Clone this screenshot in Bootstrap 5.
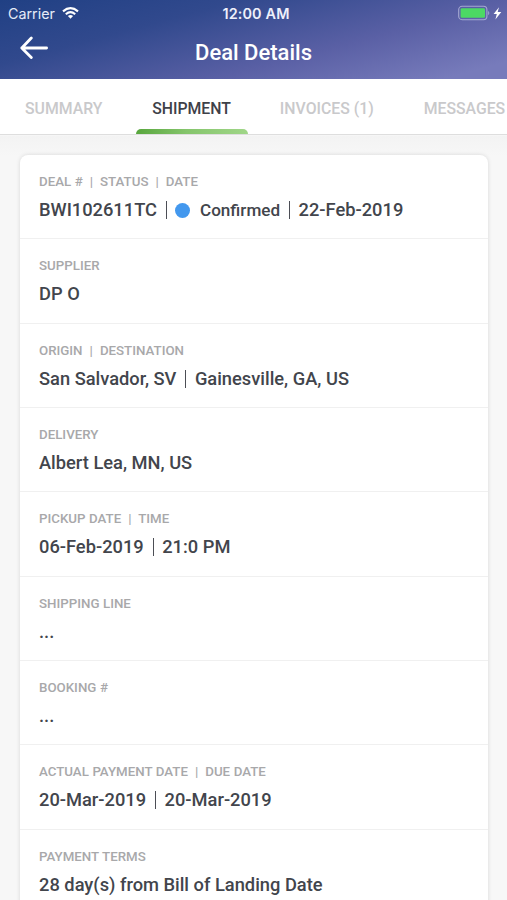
<!DOCTYPE html>
<html lang="en">
<head>
<meta charset="utf-8">
<meta name="viewport" content="width=device-width, initial-scale=1">
<title>Deal Details</title>
<link rel="stylesheet" href="https://cdn.jsdelivr.net/npm/bootstrap@5.3.0/dist/css/bootstrap.min.css">
<style>
body{font-family:Roboto,"Liberation Sans",sans-serif;background:#f6f6f6;height:900px;overflow:hidden}
.app-head{height:79px;color:#fff;background:linear-gradient(165deg,#204084 0%,#31498d 30%,#5a60a5 64%,#777bbb 92%)}
.status{height:28px;padding:0 5px 0 8px;font-size:15px;line-height:28px;font-family:Inter,sans-serif}
.status>div{flex:1 1 0}
.carrier{font-size:14.3px;color:#e6ebf8}
.clock{font-size:14.4px;font-weight:600;color:#eef0fb;letter-spacing:.15px;padding-left:2px}
.title-bar{height:51px}
.title-bar>*{flex:1 1 0;min-width:0}
.title-bar h1{font-size:22px;font-weight:500;line-height:49px;white-space:nowrap}
.back svg{margin:7px 0 0 20px}
.tabs{height:56px;background:#fff;border-bottom:1px solid #dedede;overflow:hidden;margin-bottom:1px}
.tabs .nav-link{padding:0;height:55px;line-height:59px;font-size:15.8px;font-weight:500;color:#c9c9cb;white-space:nowrap;display:flex;flex-direction:column;justify-content:space-between;align-items:center}
.tabs .nav-link.active{color:#3e4148;width:112px}
.tabs .nav-link.active::after{content:"";height:5px;width:112px;flex:none;border-radius:6px 6px 0 0;background:linear-gradient(90deg,#58a63d,#85c56c 45%,#a0d688)}
.tabs .nav-link span{height:50px}
.sheet{padding:19px 19px 0 20px;background:linear-gradient(#f3f3f3,#f7f7f7 20px)}
.deal{border:0;border-radius:8px;box-shadow:0 0 4px rgba(0,0,0,.13)}
.deal .list-group-item{height:84.33px;padding:18px 19px 0;border-color:#f0f0f0;border-width:0 0 1px;color:#42454c;background:transparent}
.lbl{font-size:13.3px;line-height:18px;font-weight:500;color:#a8a8aa;white-space:pre;word-spacing:.2px}
.val{font-size:18.3px;line-height:26px;font-weight:500;margin-top:6px;white-space:nowrap}
.state{font-size:17.1px}
.bar{width:1px;height:18px;background:#4c4e55;margin:0 8.5px 0 9px}
.dot{width:15px;height:15px;border-radius:50%;background:#4398ee;margin-right:9.5px}
</style>
<script src="https://cdn.jsdelivr.net/npm/bootstrap@5.3.0/dist/js/bootstrap.bundle.min.js"></script>
</head>
<body>
<header class="app-head">
 <div class="status d-flex">
  <div class="d-flex align-items-center"><span class="carrier">Carrier</span>
   <svg width="17" height="12" style="margin-left:7px;margin-top:-2px" viewBox="0 0 17 12" fill="none" stroke="#fff" stroke-width="2.1"><path d="M1 4.4Q8.5-2 16 4.4"/><path d="M3.8 7.2Q8.5 3.1 13.2 7.2"/><path d="M8.5 11.8L5.9 9.1Q8.5 7 11.1 9.1Z" fill="#fff" stroke="none"/></svg></div>
  <div class="clock text-center">12:00 AM</div>
  <div class="d-flex align-items-center justify-content-end">
   <svg width="45" height="16" style="margin-top:-2px;margin-right:-1px" viewBox="0 0 45 16"><rect x=".7" y="1.3" width="28.2" height="13.4" rx="3.4" fill="none" stroke="#a5a9d2" stroke-width="1.1"/><rect x="2.6" y="3.2" width="24.4" height="9.6" rx="1.4" fill="#4cd964"/><path d="M30.2 5.7q2.2 2.3 0 4.6z" fill="#a5a9d2"/><path d="M41 2.2L35.6 9h3.2l-1.4 5.6 5.9-7.5h-3.6z" fill="#fff"/></svg></div>
 </div>
 <div class="title-bar d-flex">
  <div class="back"><svg class="d-block" width="28" height="24" viewBox="0 0 28 24" fill="none" stroke="#fff" stroke-width="2.8" stroke-linecap="round" stroke-linejoin="round"><path d="M26.6 13H1.8M11.3 3L1.8 13l9.5 9.6"/></svg></div>
  <h1 class="m-0 text-center">Deal Details</h1><div></div>
 </div>
</header>
<nav class="tabs nav flex-nowrap">
 <a class="nav-link" style="margin-left:25px"><span>SUMMARY</span></a>
 <a class="nav-link active" style="margin-left:33.2px"><span>SHIPMENT</span></a>
 <a class="nav-link" style="margin-left:32.3px"><span>INVOICES (1)</span></a>
 <a class="nav-link" style="margin-left:50px"><span>MESSAGES</span></a>
</nav>
<main class="sheet">
 <ul class="deal card list-group list-group-flush">
  <li class="list-group-item"><div class="lbl">DEAL #  |  STATUS  |  DATE</div><div class="val d-flex align-items-center">BWI102611TC<i class="bar"></i><i class="dot"></i><span class="state">Confirmed</span><i class="bar"></i>22-Feb-2019</div></li>
  <li class="list-group-item"><div class="lbl">SUPPLIER</div><div class="val">DP O</div></li>
  <li class="list-group-item"><div class="lbl">ORIGIN  |  DESTINATION</div><div class="val d-flex align-items-center">San Salvador, SV<i class="bar"></i>Gainesville, GA, US</div></li>
  <li class="list-group-item"><div class="lbl">DELIVERY</div><div class="val">Albert Lea, MN, US</div></li>
  <li class="list-group-item"><div class="lbl">PICKUP DATE  |  TIME</div><div class="val d-flex align-items-center">06-Feb-2019<i class="bar"></i>21:0 PM</div></li>
  <li class="list-group-item"><div class="lbl">SHIPPING LINE</div><div class="val">...</div></li>
  <li class="list-group-item"><div class="lbl">BOOKING #</div><div class="val">...</div></li>
  <li class="list-group-item"><div class="lbl">ACTUAL PAYMENT DATE  |  DUE DATE</div><div class="val d-flex align-items-center">20-Mar-2019<i class="bar"></i>20-Mar-2019</div></li>
  <li class="list-group-item"><div class="lbl">PAYMENT TERMS</div><div class="val">28 day(s) from Bill of Landing Date</div></li>
 </ul>
</main>
</body>
</html>
